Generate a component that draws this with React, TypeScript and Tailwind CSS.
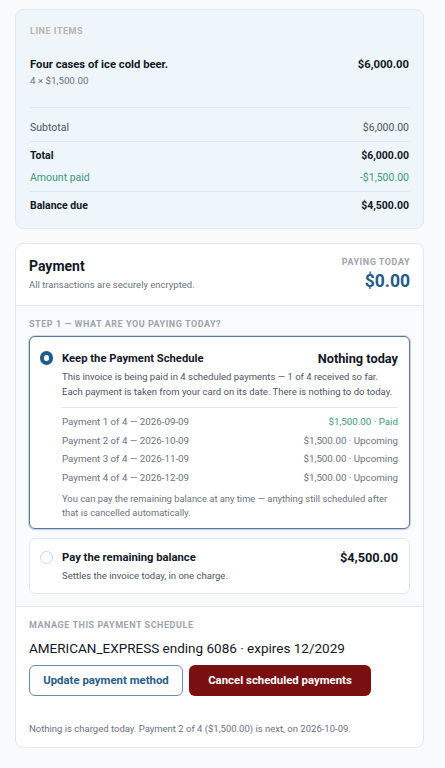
import React from "react";

const rows = [
  { label: "Payment 1 of 4 — 2026-09-09", value: "$1,500.00 · Paid", paid: true },
  { label: "Payment 2 of 4 — 2026-10-09", value: "$1,500.00 · Upcoming", paid: false },
  { label: "Payment 3 of 4 — 2026-11-09", value: "$1,500.00 · Upcoming", paid: false },
  { label: "Payment 4 of 4 — 2026-12-09", value: "$1,500.00 · Upcoming", paid: false },
];

export default function App() {
  return (
    <div
      className="min-h-[768px] w-[445px] bg-[#f8fafc] pt-[9px] pl-[15px] text-[#111827]"
      style={{ fontFamily: "Roboto, 'Liberation Sans', sans-serif" }}
    >
      <div className="w-[409px]">
        {/* Line items card */}
        <div className="rounded-[8px] border border-[#e2e9f0] bg-[#eef5fb] px-[14px] pt-[15px] pb-[15px]">
          <div className="text-[9px] leading-[13.5px] font-bold tracking-[0.06em] text-[#bcb2a8]">
            LINE ITEMS
          </div>
          <div className="mt-[18px] flex justify-between border-b border-[#dfe7ee] pb-[19px]">
            <div>
              <div className="text-[11.25px] leading-[15px] font-bold">Four cases of ice cold beer.</div>
              <div className="mt-[1px] text-[9.75px] leading-[15px] text-[#6b7280]">4 × $1,500.00</div>
            </div>
            <div className="text-[11.25px] leading-[15px] font-bold">$6,000.00</div>
          </div>
          <div className="mt-[6px] flex justify-between border-b border-[#dfe7ee] pt-[6.5px] pb-[6px] text-[10.5px] leading-[15px] text-[#4b5563]">
            <span>Subtotal</span>
            <span>$6,000.00</span>
          </div>
          <div className="flex justify-between pt-[6px] text-[10.5px] leading-[15px] font-bold">
            <span>Total</span>
            <span>$6,000.00</span>
          </div>
          <div className="flex justify-between border-b border-[#dfe7ee] pt-[7px] pb-[6px] text-[10.5px] leading-[15px] text-[#3b9a7a]">
            <span>Amount paid</span>
            <span>-$1,500.00</span>
          </div>
          <div className="flex justify-between pt-[6px] text-[10.5px] leading-[15px] font-bold">
            <span>Balance due</span>
            <span>$4,500.00</span>
          </div>
        </div>

        {/* Payment card */}
        <div className="mt-[14px] overflow-hidden rounded-[8px] border border-[#e5e7eb] bg-white">
          <div className="flex justify-between border-b border-[#e5e7eb] px-[13px] pt-[13px] pb-[11.5px]">
            <div>
              <div className="text-[14px] leading-[18px] font-bold">Payment</div>
              <div className="mt-[1.5px] text-[9.5px] leading-[15px] text-[#6b7280]">
                All transactions are securely encrypted.
              </div>
            </div>
            <div className="-mt-[1.5px] flex flex-col items-end">
              <div className="text-[9px] leading-[13.5px] font-bold tracking-[0.06em] text-[#9ca3af]">
                PAYING TODAY
              </div>
              <div className="text-[17.5px] leading-[24px] font-bold text-[#1f5c8a]">$0.00</div>
            </div>
          </div>

          <div className="border-b border-[#e5e7eb] bg-[#fafbfc] px-[13px] pt-[12px] pb-[11.5px]">
            <div className="text-[9px] leading-[13.5px] font-bold tracking-[0.06em] text-[#9ca3af]">
              STEP 1 — WHAT ARE YOU PAYING TODAY?
            </div>

            {/* Option 1 selected */}
            <div className="mt-[5px] rounded-[6px] border border-[#56799b] bg-white pt-[12.5px] pr-[11px] pb-[8.5px] pl-[9.5px] shadow-[0_0_0_1px_rgba(86,121,155,0.25),0_1px_3px_rgba(0,0,0,0.08)]">
              <div className="flex">
                <div className="mt-[1.7px] h-[13.5px] w-[13.5px] shrink-0 rounded-full border-[4px] border-[#1f5c8a] bg-white" />
                <div className="ml-[9px] flex-1">
                  <div className="flex items-center justify-between">
                    <span className="text-[11.25px] leading-[17px] font-bold">Keep the Payment Schedule</span>
                    <span className="text-[12.75px] leading-[17px] font-bold">Nothing today</span>
                  </div>
                  <div className="mt-[2.5px] text-[9.5px] leading-[15px] text-[#4b5563]">
                    This invoice is being paid in 4 scheduled payments — 1 of 4 received so far. Each payment is taken from your card on its date. There is nothing to do today.
                  </div>
                  <div className="mt-[8px] border-t border-[#e5e7eb] pt-[5px]">
                    {rows.map((r) => (
                      <div key={r.label} className="flex justify-between text-[9.75px] leading-[18.67px]">
                        <span className="text-[#6b7280]">{r.label}</span>
                        <span className={r.paid ? "text-[#3b9a7a]" : "text-[#6b7280]"}>{r.value}</span>
                      </div>
                    ))}
                  </div>
                  <div className="mt-[4px] text-[9.4px] leading-[14px] text-[#6b7280]">
                    You can pay the remaining balance at any time — anything still scheduled after that is cancelled automatically.
                  </div>
                </div>
              </div>
            </div>

            {/* Option 2 */}
            <div className="mt-[8.5px] rounded-[6px] border border-[#e5e7eb] bg-white pt-[10px] pr-[11px] pb-[10.5px] pl-[9.5px]">
              <div className="flex">
                <div className="mt-[2px] h-[13.5px] w-[13.5px] shrink-0 rounded-full border border-[#d1d5db] bg-white" />
                <div className="ml-[9px] flex-1">
                  <div className="flex items-center justify-between">
                    <span className="text-[11.25px] leading-[17px] font-bold">Pay the remaining balance</span>
                    <span className="text-[12.75px] leading-[17px] font-bold">$4,500.00</span>
                  </div>
                  <div className="mt-[2px] text-[9.5px] leading-[15px] text-[#4b5563]">
                    Settles the invoice today, in one charge.
                  </div>
                </div>
              </div>
            </div>
          </div>

          {/* Manage */}
          <div className="px-[13px] pt-[12px] pb-[11px]">
            <div className="text-[9px] leading-[13.5px] font-bold tracking-[0.06em] text-[#9ca3af]">
              MANAGE THIS PAYMENT SCHEDULE
            </div>
            <div className="mt-[6.5px] text-[13.5px] leading-[18px] text-[#111827]">
              AMERICAN_EXPRESS ending 6086 · expires 12/2029
            </div>
            <div className="mt-[8px] flex gap-[6px]">
              <button className="h-[31px] w-[154px] rounded-[6px] border border-[#6a8bab] bg-white text-[11.4px] font-bold text-[#275d8a]">
                Update payment method
              </button>
              <button className="h-[31px] w-[182px] rounded-[6px] bg-[#7a0f12] text-[11.4px] font-bold text-white">
                Cancel scheduled payments
              </button>
            </div>
            <div className="mt-[25px] text-[9.5px] leading-[15px] text-[#6b7280]">
              Nothing is charged today. Payment 2 of 4 ($1,500.00) is next, on 2026-10-09.
            </div>
          </div>
        </div>
      </div>
    </div>
  );
}
